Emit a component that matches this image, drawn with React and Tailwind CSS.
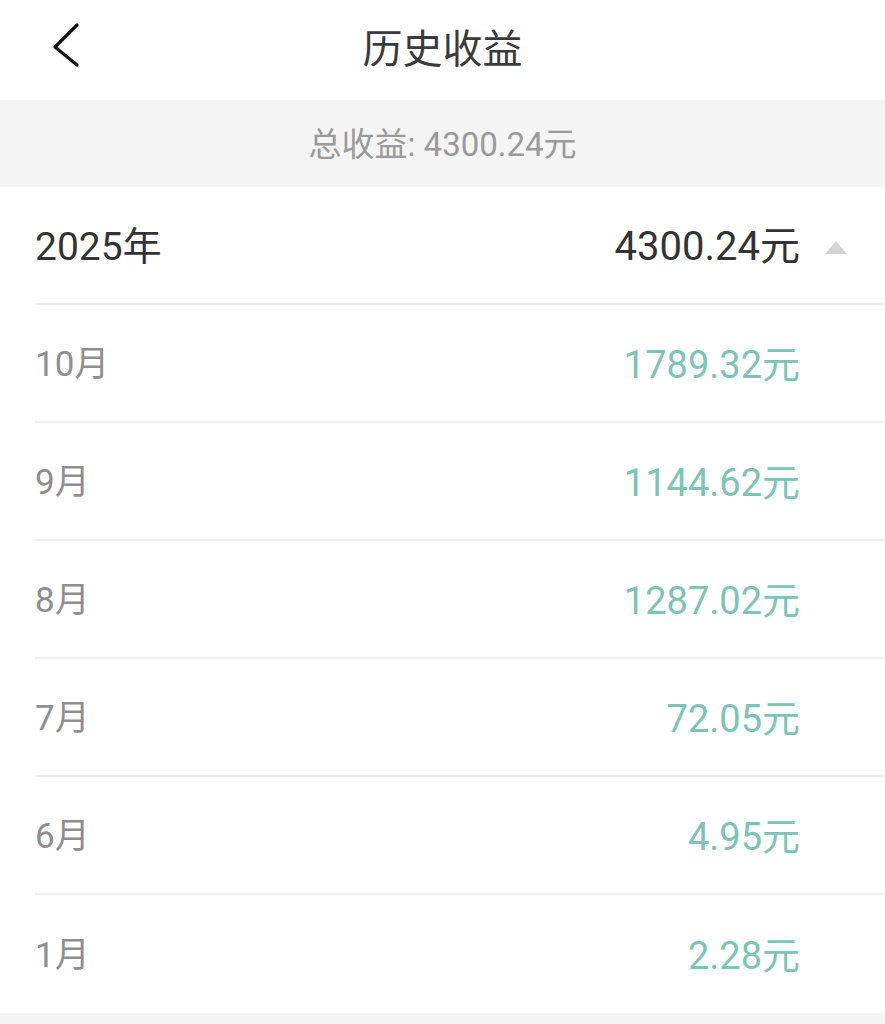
import React from 'react';

const months = [
  { label: '10月', amount: '1789.32元' },
  { label: '9月', amount: '1144.62元' },
  { label: '8月', amount: '1287.02元' },
  { label: '7月', amount: '72.05元' },
  { label: '6月', amount: '4.95元' },
  { label: '1月', amount: '2.28元' },
];

const font = { fontFamily: 'Roboto, "Noto Sans CJK SC", sans-serif' };

function BackIcon() {
  return (
    <svg width="40" height="50" viewBox="0 0 40 50" fill="none">
      <path d="M37 7 L15 29 L37 47" stroke="#111" strokeWidth="3.2" strokeLinecap="round" strokeLinejoin="round" />
    </svg>
  );
}

export default function App() {
  return (
    <div className="min-h-screen bg-[#f4f4f4]" style={font}>
      <div className="relative flex h-[100px] items-center justify-center bg-white">
        <button className="absolute left-[40px] top-[18px]">
          <BackIcon />
        </button>
        <h1 className="text-[40px] text-[#3a3a3a]">历史收益</h1>
      </div>

      <div className="flex h-[87px] items-center justify-center pt-[2px] text-[33px] text-[#9a9a9a]">
        总收益: 4300.24元
      </div>

      <div className="bg-white pl-[35px]">
        <div className="flex h-[118px] items-center justify-between border-b-2 border-[#efefef] pt-[4px]">
          <span className="text-[39px] text-[#333]">2025年</span>
          <div className="flex items-center">
            <span className="text-[40px] text-[#333]">4300.24元</span>
            <div className="flex w-[85px] items-center justify-end pr-[38px]">
              <svg width="22" height="13" viewBox="0 0 22 13">
                <path d="M11 0 L22 13 L0 13 Z" fill="#d4d4d4" />
              </svg>
            </div>
          </div>
        </div>

        {months.map((m, i) => (
          <div
            key={m.label}
            className={`flex h-[118px] items-center justify-between pt-[4px] ${i < months.length - 1 ? 'border-b-2 border-[#efefef]' : ''}`}
          >
            <span className="text-[35px] text-[#8e8e8e]">{m.label}</span>
            <span className="pr-[85px] text-[38px] text-[#7cc4b5]">{m.amount}</span>
          </div>
        ))}
      </div>
    </div>
  );
}
